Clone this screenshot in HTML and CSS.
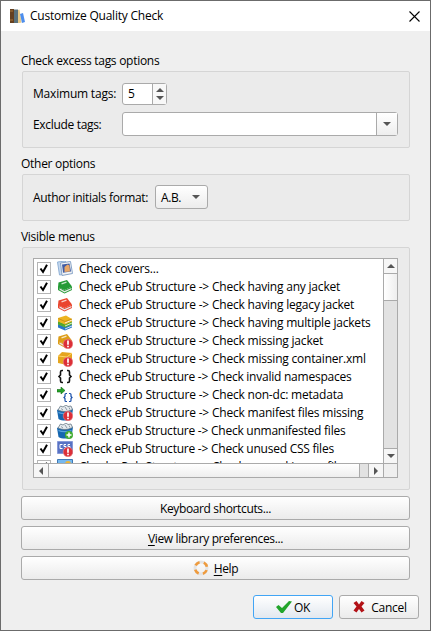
FILE: index.html
```html
<!DOCTYPE html>
<html lang="en">
<head>
<meta charset="utf-8">
<title>Customize Quality Check</title>
<link rel="stylesheet" href="styles.css">
</head>
<body>
<svg class="defs" width="0" height="0">
  <defs>
    <g id="check"><path d="M2.500 5.500 5 9 9 1.800" fill="none" stroke="#000" stroke-width="2"/></g>
    <g id="error"><circle cx="11" cy="11" r="4.800" fill="#dc2f38" stroke="#eb8d8d" stroke-width=".6"/><path d="M11 7.500v4.300M11 12.800v1.500" stroke="#fff" stroke-width="1.700"/></g>
    <g id="book"><path d="M1.500 3.500 10 1l5 6.500L7.500 11 1 8z" fill="currentColor"/><path d="M1 7.500 7.500 11 15 7.500V11l-7.500 3.500L1 11z" fill="currentColor"/><path d="m2.500 9.300 5 2.700 7-3v1.300l-7 3.100-5-2.600z" fill="#e8e8e8"/><path d="m4.500 4.800 5-1.600" stroke="#fff" stroke-opacity=".75" stroke-width="1.400"/></g>
    <g id="bin"><path d="M0 5c3-2 12-3 16-1l-1.500 10c-3 2-10 2-13 0z" fill="#1667b0"/><path d="m1 5 2.500-4L6 2l3-2 2 1.500L14 1l1.500 3.500C11 7 5 7 1 5z" fill="#e6ebef" stroke="#667784" stroke-width=".8"/><path d="M4 3.500 6 5M8 2l2 3M12 2.500l1 2" stroke="#667784" stroke-width=".7"/><path d="M1.500 7.500c3 1.500 10 1.500 13 0" fill="none" stroke="#5ba4dd" stroke-width="1.300"/></g>
  </defs>
</svg>
<div class="window">
  <header class="titlebar">
    <svg class="app" width="16" height="16" viewBox="0 0 16 16"><path d="M1 1h4v14H1z" fill="#65401f"/><path d="M1 3h3M1 12h3" stroke="#a87438"/><path d="M5 1.500h4V15H5z" fill="#59707a"/><path d="m9 2 1.500-.5 2 13-2 .5H9z" fill="#e9c985"/><path d="m11 6 3-1 2 9-3 1z" fill="#4d8eed"/></svg>
    <span class="title">Customize Quality Check</span>
    <svg class="close" width="11" height="11" viewBox="0 0 11 11"><path d="m.5.5 10 10m0-10-10 10" stroke="#000" stroke-width="1.1"/></svg>
  </header>
  <main>
    <h2>Check excess tags options</h2>
    <section class="group tags">
      <div class="field"><label class="w89">Maximum tags:</label><div class="spin"><span>5</span><i><b class="up"></b><b class="down"></b></i></div></div>
      <div class="field"><label class="w89 low">Exclude tags:</label><div class="combo"><i><b class="down"></b></i></div></div>
    </section>
    <h2>Other options</h2>
    <section class="group other">
      <div class="field"><label class="w122 low">Author initials format:</label><div class="select"><span>A.B.</span><b class="down"></b></div></div>
    </section>
    <h2>Visible menus</h2>
    <section class="group menus">
      <div class="list">
        <div class="rows">
          <div class="row"><svg class="box"><use href="#check"/></svg><svg class="icon"><path d="m.5 1 8-1 1 13-7 1z" fill="#c4d8ef" stroke="#8fb0d5"/><path d="m3.500 2 10-1.500 2 12-10.500 2z" fill="#f4f4f4" stroke="#88a4c8"/><path d="m5 3.500 7.500-1 1.500 8-8 1.200z" fill="#405ca4"/><path d="M7.500 11V6l3-2.500 2 1 .5 6z" fill="#e9a766"/></svg><span>Check covers...</span></div>
          <div class="row"><svg class="box"><use href="#check"/></svg><svg class="icon green"><use href="#book"/></svg><span>Check ePub Structure -&gt; Check having any jacket</span></div>
          <div class="row"><svg class="box"><use href="#check"/></svg><svg class="icon red"><use href="#book"/></svg><span>Check ePub Structure -&gt; Check having legacy jacket</span></div>
          <div class="row"><svg class="box"><use href="#check"/></svg><svg class="icon"><path d="m1 9 7 3 7-3v3.500L8 15.500l-7-3z" fill="#2878c8"/><path d="m1 6 7 3 7-3v3.500L8 12.500l-7-3z" fill="#55a82b"/><path d="m1 3 8-2.500L15 4v2.500L8 9.500l-7-3z" fill="#edb421"/><path d="m8 8 7-3M8 11l7-3M8 14l7-3" fill="none" stroke="#fff" stroke-width=".8"/><path d="m1.500 3.500 6.500 3 7-2.500" fill="none" stroke="#b57b0b" stroke-width=".6"/></svg><span>Check ePub Structure -&gt; Check having multiple jackets</span></div>
          <div class="row"><svg class="box"><use href="#check"/></svg><svg class="icon gold"><use href="#book"/><use href="#error"/></svg><span>Check ePub Structure -&gt; Check missing jacket</span></div>
          <div class="row"><svg class="box"><use href="#check"/></svg><svg class="icon"><path d="m1 5 4-4 10 1v9l-5 3-9-2z" fill="#e5a51f"/><path d="m1 5 9 1 5-4M10 6v8" fill="none" stroke="#ffd66b"/><use href="#error"/></svg><span>Check ePub Structure -&gt; Check missing container.xml</span></div>
          <div class="row"><svg class="box"><use href="#check"/></svg><svg class="icon"><path d="M6 1.500H5q-1.500 0-1.500 1.500v3L2 7.500 3.500 9v3q0 1.500 1.500 1.500h1M10 1.500h1q1.500 0 1.500 1.500v3L14 7.500 12.500 9v3q0 1.500-1.500 1.500h-1" fill="none" stroke="#111" stroke-width="1.600"/></svg><span class="tight">Check ePub Structure -&gt; Check invalid namespaces</span></div>
          <div class="row"><svg class="box"><use href="#check"/></svg><svg class="icon"><path d="M0 2.500h4V0l4 3.500L4 7V5H0z" fill="#26a329" stroke="#126b16" stroke-width=".6"/><path d="M10 6.500H9q-1 0-1 1v2l-1 1 1 1v2q0 1 1 1h1M12 6.500h1q1 0 1 1v2l1 1-1 1v2q0 1-1 1h-1" fill="none" stroke="#174eaa" stroke-width="1.200"/></svg><span>Check ePub Structure -&gt; Check non-dc: metadata</span></div>
          <div class="row"><svg class="box"><use href="#check"/></svg><svg class="icon"><use href="#bin"/><use href="#error"/></svg><span>Check ePub Structure -&gt; Check manifest files missing</span></div>
          <div class="row"><svg class="box"><use href="#check"/></svg><svg class="icon"><use href="#bin"/><circle cx="12" cy="12" r="4" fill="#43ac32"/><path d="M9.500 12h5M12 9.500v5" stroke="#fff" stroke-width="1.500"/></svg><span class="tight">Check ePub Structure -&gt; Check unmanifested files</span></div>
          <div class="row"><svg class="box"><use href="#check"/></svg><svg class="icon"><path d="M.5.500h15v12H.500z" fill="#5873c4" stroke="#8799d8"/><path d="M5.500 3.500H3v4h2.500m3.500-4H7v2h2v2H7m6-4h-2v2h2v2h-2" fill="none" stroke="#fff"/><use href="#error"/></svg><span class="tight">Check ePub Structure -&gt; Check unused CSS files</span></div>
          <div class="row"><svg class="box"><use href="#check"/></svg><svg class="icon"><path d="M.5.500h15v14H.500z" fill="#75b8ef" stroke="#3f78b4"/><circle cx="11" cy="5" r="3" fill="#f4b630"/></svg><span>Check ePub Structure -&gt; Check unused image files</span></div>
        </div>
        <div class="vbar"><div class="sb"><b class="up"></b></div><div class="vthumb"></div><div class="track"></div><div class="sb"><b class="down"></b></div></div>
        <div class="hbar"><div class="sb"><b class="left"></b></div><div class="hthumb"></div><div class="htrack"></div><div class="sb"><b class="right"></b></div></div>
        <div class="corner"></div>
      </div>
    </section>
    <div class="button wide"><span>Keyboard shortcuts...</span></div>
    <div class="button wide"><span><u>V</u>iew library preferences...</span></div>
    <div class="button wide"><svg width="16" height="16" viewBox="0 0 16 16"><circle cx="8" cy="8" r="6" fill="none" stroke="#e4e4e4" stroke-width="3"/><circle cx="8" cy="8" r="6" fill="none" stroke="#ef9b3d" stroke-width="2.600" stroke-dasharray="5 4.425" stroke-dashoffset="-2.200"/></svg><span><u>H</u>elp</span></div>
  </main>
  <footer>
    <div class="button ok"><svg width="16" height="16" viewBox="0 0 16 16"><path d="m0 8 2.500-2L6 9l7-7 3 .5L7 14H5z" fill="#22a52b"/></svg><span>OK</span></div>
    <div class="button cancel"><svg width="16" height="16" viewBox="0 0 16 16"><path d="m2.500 4 3-2L8 5.500 10.500 2l3 2-3 3.500 3 4-3 2L8 10l-2.500 3.500-3-2 3-4z" fill="#b31217"/></svg><span>Cancel</span></div>
  </footer>
</div>
</body>
</html>
```
FILE: styles.css
```css
* { box-sizing: border-box; }
body { margin: 0; font: 12px/16px "Open Sans", sans-serif; letter-spacing: -.2px; color: #000; }
.defs { display: block; }
.window { width: 431px; height: 631px; border: 1px solid #6b6b6b; background: #efefef; overflow: hidden; }
.titlebar { height: 30px; background: #fff; display: flex; align-items: center; padding: 0 10px 0 8px; }
.title { margin-left: 5px; flex: 1; letter-spacing: -.23px; }
main { padding: 22px 20px 0; }
h2 { font: inherit; letter-spacing: -.28px; margin: 0; height: 18px; white-space: nowrap; }
.group { margin-left: 1px; width: 388px; border: 1px solid #d5d5d5; border-radius: 2px; background: #ebebeb; }
.tags { height: 77px; padding: 11px 11px 0 10px; margin-bottom: 8px; display: flex; flex-direction: column; gap: 7px; }
.other { height: 47px; padding: 10px; margin-bottom: 8px; }
.menus { height: 243px; padding: 10px; margin-bottom: 6px; }
.field { display: flex; align-items: center; white-space: nowrap; }
.w89 { width: 89px; }
.w122 { width: 122px; }
.low { padding-top: 2px; letter-spacing: -.32px; }
.spin, .combo, .select, .button { border: 1px solid #aaa; border-radius: 3px; display: flex; align-items: center; background: #fff; }
.spin { width: 45px; height: 22px; padding-left: 5px; }
.spin span { flex: 1; }
.spin i { width: 14px; height: 20px; border-left: 1px solid #aaa; display: flex; flex-direction: column; align-items: center; justify-content: center; gap: 4px; background: #f8f8f8; }
.combo { width: 276px; height: 24px; justify-content: flex-end; }
.combo i { width: 21px; height: 22px; border-left: 1px solid #aaa; display: flex; align-items: center; justify-content: center; background: linear-gradient(#fff, #eee); }
.select { width: 53px; height: 24px; padding: 0 7px 0 5px; justify-content: space-between; background: linear-gradient(#fff, #ececec); letter-spacing: -.4px; }
.select span { padding-top: 2px; }
b { width: 0; height: 0; border: 4px solid transparent; }
.down { border-top-color: #555; border-bottom: 0; }
.up { border-bottom-color: #555; border-top: 0; }
.left { border-right-color: #555; border-left: 0; }
.right { border-left-color: #555; border-right: 0; }
.list { width: 365px; height: 220px; border: 1px solid #aaa; background: #fff; display: grid; grid-template: 204px 14px / 349px 14px; }
.rows { overflow: hidden; padding: 1px 0 0 3px; }
.row { height: 18px; display: flex; align-items: center; white-space: nowrap; }
.tight { letter-spacing: -.24px; }
.box { width: 14px; height: 14px; border: 1px solid #b5b5b5; background: #fff; margin-right: 6px; flex: none; }
.icon { width: 16px; height: 16px; margin-right: 6px; flex: none; }
.green { color: #249b35; }
.red { color: #ea452e; }
.gold { color: #dd9d17; }
.vbar { border-left: 1px solid #aaa; display: flex; flex-direction: column; background: #e2e2e2; }
.vbar .sb { height: 14px; }
.vthumb { height: 28px; background: linear-gradient(90deg, #fff, #eee); border: solid #aaa; border-width: 1px 0; }
.track { flex: 1; border-bottom: 1px solid #aaa; }
.sb { background: #f6f6f6; display: flex; align-items: center; justify-content: center; }
.hbar { border-top: 1px solid #aaa; display: flex; background: #e2e2e2; }
.hbar .sb { width: 14px; }
.hthumb { flex: 1; background: linear-gradient(#fff, #eee); border: solid #aaa; border-width: 0 1px; }
.htrack { width: 9px; border-right: 1px solid #aaa; }
.corner { border: solid #aaa; border-width: 1px 0 0 1px; background: #efefef; }
.button { height: 24px; justify-content: center; background: linear-gradient(#fff, #ebebeb); letter-spacing: -.36px; }
.button span { padding-top: 2px; }
.wide { width: 389px; margin-bottom: 6px; gap: 5px; }
footer { display: flex; justify-content: flex-end; gap: 6px; padding: 9px 11px 0 0; }
footer .button { width: 80px; gap: 2px; }
footer .cancel { gap: 4px; letter-spacing: -.25px; }
footer .ok { border-color: #42a5f5; background: linear-gradient(#fff, #e2e8ef); }
u { text-underline-offset: 2px; }
```
